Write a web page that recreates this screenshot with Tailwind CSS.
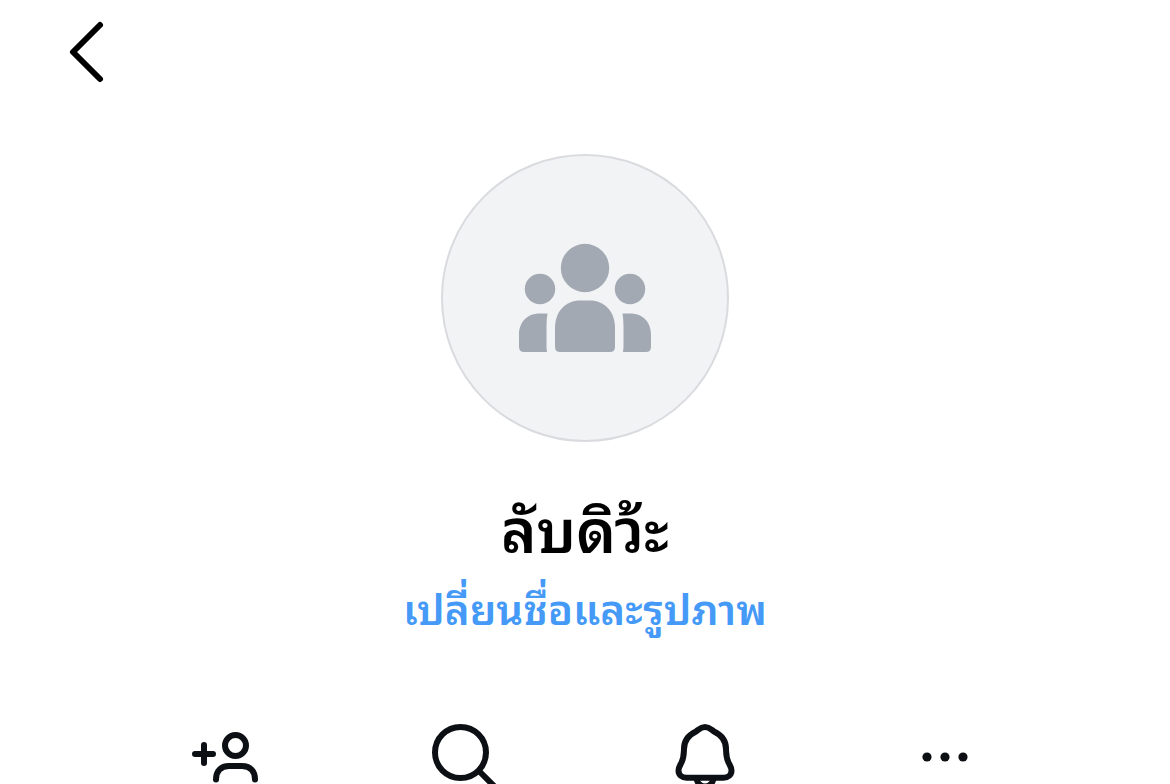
<!DOCTYPE html>
<html lang="th">
<head>
    <meta charset="UTF-8">
    <meta name="viewport" content="width=device-width, initial-scale=1.0">
    <title>ลับดิว้ะ</title>
    <script src="https://cdn.jsdelivr.net/npm/@tailwindcss/browser@4"></script>
</head>
<body class="h-screen overflow-hidden bg-white font-['Noto_Sans_Thai_Looped','Liberation_Sans',sans-serif] text-black">

<header class="px-12 pt-4">
    <button type="button" aria-label="ย้อนกลับ" class="block cursor-pointer">
        <svg class="size-18" viewBox="0 0 72 72" fill="none" stroke="currentColor" stroke-width="6" stroke-linecap="round" stroke-linejoin="round">
            <path d="M52 9L25 36l27 27"/>
        </svg>
    </button>
</header>

<main class="flex flex-col items-center pt-16">
    <!-- Group avatar -->
    <div class="mt-0.5 flex size-72 items-center justify-center rounded-full border-2 border-[#dadbdf] bg-[#f2f3f5]">
        <svg class="size-36" viewBox="0 0 144 144" fill="#a2a9b3" aria-hidden="true">
            <circle cx="72" cy="42" r="24.2"/>
            <circle cx="27" cy="63" r="15.2"/>
            <circle cx="117" cy="63" r="15.2"/>
            <path d="M42 102c0-17 11-27.5 25-27.5h10c14 0 25 10.5 25 27.5v19q0 5-5 5H47q-5 0-5-5z"/>
            <path d="M34.5 87.5H27C14 87.5 6 96 6 109v12q0 5 5 5h23q-.5-3-.5-6v-20q0-7 1-12.5z"/>
            <path d="M109.5 87.5H117c13 0 21 8.500 21 21.500v12q0 5-5 5h-23q.5-3 .5-6v-20q0-7-1-12.500z"/>
        </svg>
    </div>

    <h1 class="mt-12 mb-2 text-6xl leading-[72px] font-semibold">ลับดิว้ะ</h1>
    <a href="#edit" class="text-[42px] leading-[72px] font-semibold text-[#4599f7]">เปลี่ยนชื่อและรูปภาพ</a>

    <nav class="mt-20 grid w-full max-w-[960px] grid-cols-4 justify-items-center text-[#0c1014]">
        <button type="button" aria-label="เพิ่มคน" class="cursor-pointer">
            <svg class="size-18" viewBox="0 0 72 72" fill="none" stroke="currentColor" stroke-width="6" stroke-linecap="round">
                <path d="M6 32h18M15 23v18"/>
                <circle cx="46.5" cy="23.5" r="10.5"/>
                <path d="M27 57.5c0-8.500 5-13.500 13-13.500h13c8 0 13 5 13 13.500"/>
            </svg>
        </button>
        <button type="button" aria-label="ค้นหา" class="cursor-pointer">
            <svg class="size-18" viewBox="0 0 72 72" fill="none" stroke="currentColor" stroke-width="6" stroke-linecap="round">
                <circle cx="31.5" cy="30.5" r="25.5"/>
                <path d="M50 49l17 17"/>
            </svg>
        </button>
        <button type="button" aria-label="การแจ้งเตือน" class="cursor-pointer">
            <svg class="size-18" viewBox="0 0 72 72" fill="none" stroke="currentColor" stroke-width="6" stroke-linejoin="round">
                <path d="M36 5c-4.500 0-6 2.500-9 4.500C19.500 13 15 18.500 15 27c-.3 5 0 8.500-2.500 13.500C11 43.500 9.500 45.500 9.500 48.500c0 4.500 3.500 7.200 8 7.200h37c4.500 0 8-2.700 8-7.200 0-3-1.500-5-3-8C57 35.500 57.300 32 57 27c0-8.500-4.500-14-12-17.500C42 7.500 40.500 5 36 5z"/>
                <path d="M27.500 57c1.500 5 4.500 7.500 8.500 7.500s7-2.500 8.500-7.500"/>
            </svg>
        </button>
        <button type="button" aria-label="ตัวเลือกเพิ่มเติม" class="cursor-pointer">
            <svg class="size-18" viewBox="0 0 72 72" fill="currentColor">
                <circle cx="18" cy="35" r="4.600"/>
                <circle cx="36" cy="35" r="4.600"/>
                <circle cx="54" cy="35" r="4.600"/>
            </svg>
        </button>
    </nav>
</main>

</body>
</html>
